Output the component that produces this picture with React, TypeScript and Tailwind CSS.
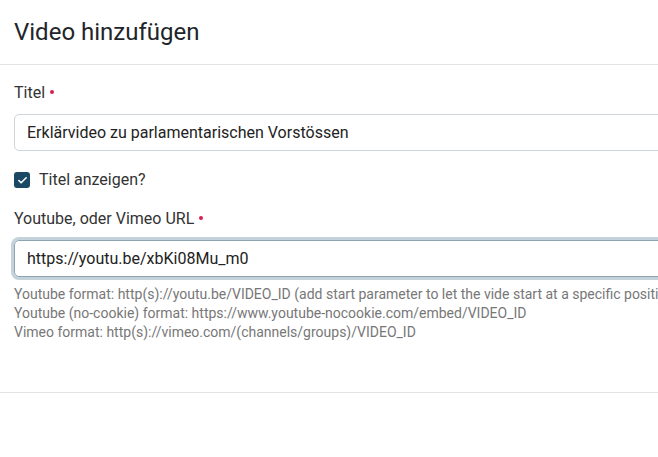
import { Check } from 'lucide-react';

function RequiredDot() {
  return <span className="ml-[5px] inline-block h-[4px] w-[4px] translate-y-[-4px] rounded-full bg-[#d6204e]" />;
}

export default function App() {
  return (
    <div className="h-[457px] w-[658px] overflow-hidden bg-white font-['Roboto',sans-serif] text-[#212529]">
      <div className="w-[1000px]">
        {/* Header */}
        <div className="flex h-[65px] items-center border-b border-[#e3e3e3] px-[14px]">
          <h1 className="text-[24px] font-normal leading-none">Video hinzufügen</h1>
        </div>

        {/* Body */}
        <div className="h-[328px] border-b border-[#e3e3e3] px-[14px] pt-[17px]">
          <label className="mb-[10px] block text-[16px] leading-[22px] text-[#333]">
            Titel
            <RequiredDot />
          </label>
          <div className="flex h-[37px] items-center rounded-[5px] border border-[#cfd4d8] px-[12px] text-[16px] text-[#222]">
            Erklärvideo zu parlamentarischen Vorstössen
          </div>

          <div className="mt-[18px] flex h-[22px] items-center gap-[9px]">
            <span className="flex h-[16px] w-[16px] items-center justify-center rounded-[3px] bg-[#1b4864]">
              <Check size={11} strokeWidth={3.5} className="text-white" />
            </span>
            <span className="text-[16px] text-[#333]">Titel anzeigen?</span>
          </div>

          <label className="mb-[10px] mt-[17px] block text-[16px] leading-[22px] text-[#333]">
            Youtube, oder Vimeo URL
            <RequiredDot />
          </label>
          <div className="flex h-[37px] items-center rounded-[5px] border border-[#8fa3b0] px-[12px] text-[16px] text-[#222] shadow-[0_0_0_3px_#c4d2db]">
            https://youtu.be/xbKi08Mu_m0
          </div>

          <div className="mt-[8px] text-[14px] leading-[19px] text-[#777]">
            <div>Youtube format: http(s)://youtu.be/VIDEO_ID (add start parameter to let the vide start at a specific position)</div>
            <div>Youtube (no-cookie) format: https://www.youtube-nocookie.com/embed/VIDEO_ID</div>
            <div>Vimeo format: http(s)://vimeo.com/(channels/groups)/VIDEO_ID</div>
          </div>
        </div>
      </div>
    </div>
  );
}
